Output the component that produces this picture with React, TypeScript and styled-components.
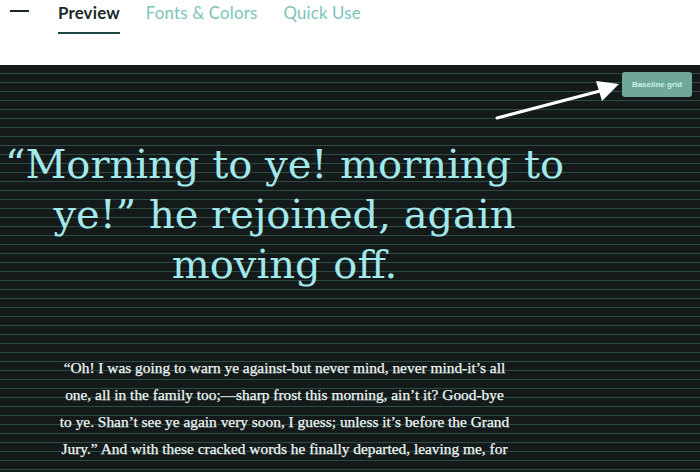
import React from "react";
import styled, { createGlobalStyle } from "styled-components";

const Global = createGlobalStyle`
  html, body { margin: 0; padding: 0; background: #ffffff; }
  body { width: 700px; height: 472px; overflow: hidden; }
`;

const Page = styled.div`
  width: 700px;
  height: 472px;
  display: flex;
  flex-direction: column;
  overflow: hidden;
`;

const Header = styled.header`
  height: 65px;
  flex: none;
  background: #ffffff;
  display: flex;
  align-items: flex-start;
  padding-left: 10px;
  box-sizing: border-box;
`;

const Burger = styled.div`
  width: 19px;
  height: 2px;
  background: #1a2a2a;
  margin-top: 10px;
  margin-right: 29px;
`;

const Tabs = styled.nav`
  display: flex;
  gap: 26px;
`;

const Tab = styled.div<{ $active?: boolean }>`
  font-family: Lato, "Open Sans", sans-serif;
  font-size: 16.8px;
  font-weight: ${(p) => (p.$active ? 700 : 400)};
  color: ${(p) => (p.$active ? "#17292a" : "#7cc4bb")};
  padding: 3px 0 9px;
  line-height: 20px;
  border-bottom: 2px solid ${(p) => (p.$active ? "#1d4843" : "transparent")};
  letter-spacing: 0.2px;
`;

const Stage = styled.section`
  flex: 1;
  position: relative;
  background-color: #141919;
  background-image: repeating-linear-gradient(
    to bottom,
    transparent 0px,
    transparent 8px,
    #2d4a45 8px,
    #2d4a45 9px
  );
  display: flex;
  flex-direction: column;
  align-items: flex-start;
`;

const Content = styled.div`
  width: 569px;
  display: flex;
  flex-direction: column;
  align-items: center;
  padding-top: 74px;
`;

const Heading = styled.h1`
  margin: 0;
  font-family: "DejaVu Serif", "Liberation Serif", serif;
  font-weight: 400;
  font-size: 40px;
  line-height: 50px;
  color: #a3e9eb;
  text-align: center;
  white-space: nowrap;
`;

const Line = styled.span`
  display: block;
`;

const Body = styled.p`
  margin: 65px 0 0;
  font-family: "Liberation Serif", serif;
  font-size: 15.4px;
  line-height: 27px;
  color: #eef8f6;
  text-align: center;
  white-space: nowrap;
  -webkit-text-stroke: 0.25px #eef8f6;
`;

const GridButton = styled.button`
  position: absolute;
  top: 7px;
  right: 8px;
  width: 70px;
  height: 25px;
  border: none;
  border-radius: 3px;
  background: #6fa79a;
  color: #cdf2ec;
  font-family: "Liberation Sans", Arial, sans-serif;
  font-size: 8px;
  font-weight: 700;
  padding: 0;
`;

const Arrow = styled.svg`
  position: absolute;
  left: 494px;
  top: 15px;
`;

export default function App() {
  return (
    <Page>
      <Global />
      <Header>
        <Burger />
        <Tabs>
          <Tab $active>Preview</Tab>
          <Tab>Fonts &amp; Colors</Tab>
          <Tab>Quick Use</Tab>
        </Tabs>
      </Header>
      <Stage>
        <Content>
          <Heading>
            <Line>“Morning to ye! morning to</Line>
            <Line>ye!” he rejoined, again</Line>
            <Line>moving off.</Line>
          </Heading>
          <Body>
            <Line>“Oh! I was going to warn ye against-but never mind, never mind-it’s all</Line>
            <Line>one, all in the family too;—sharp frost this morning, ain’t it? Good-bye</Line>
            <Line>to ye. Shan’t see ye again very soon, I guess; unless it’s before the Grand</Line>
            <Line>Jury.” And with these cracked words he finally departed, leaving me, for</Line>
          </Body>
        </Content>
        <GridButton>Baseline grid</GridButton>
        <Arrow width="130" height="45" viewBox="0 0 130 45">
          <line x1="3" y1="38" x2="106" y2="11" stroke="#ffffff" strokeWidth="3" strokeLinecap="round" />
          <polygon points="125,4 102,1 108,21" fill="#ffffff" />
        </Arrow>
      </Stage>
    </Page>
  );
}
